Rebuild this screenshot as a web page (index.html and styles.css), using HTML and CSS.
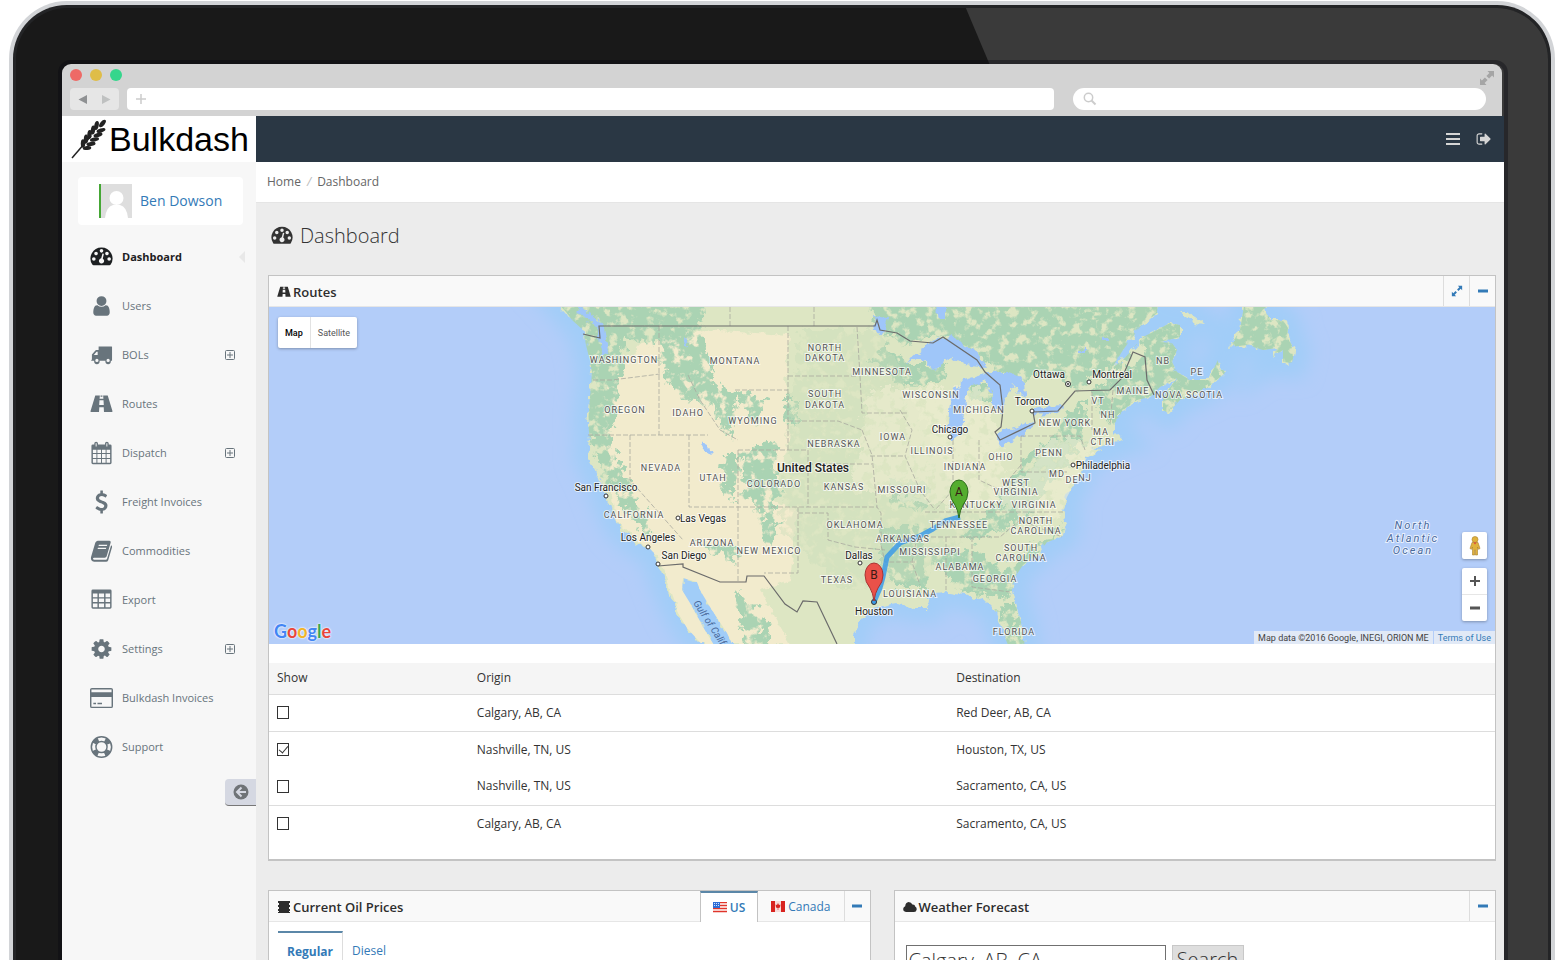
FILE: index.html
```html
<!DOCTYPE html>
<html lang="en">
<head>
  <meta charset="UTF-8">
  <meta name="viewport" content="width=device-width, initial-scale=1.0">
  <title>Bulkdash - Dashboard</title>
  <link rel="stylesheet" href="styles.css">
</head>
<body>
  <!-- icon sprite -->
  <svg class="sprite" aria-hidden="true">
    <symbol id="i-dash" viewBox="0 0 24 24">
      <path fill-rule="evenodd" d="M12 2a11.5 11.5 0 0 0-9.6 17.800q.5.7 1.300.700h16.600q.8 0 1.300-.7A11.500 11.500 0 0 0 12 2zM4 12.200a1.900 1.900 0 1 1 0 3.800 1.900 1.900 0 0 1 0-3.800zM6.300 6.400a1.900 1.900 0 1 1 0 3.800 1.900 1.900 0 0 1 0-3.800zM12 3.700a1.900 1.900 0 1 1 0 3.800A1.900 1.900 0 0 1 12 3.700zM17.700 6.400a1.900 1.900 0 1 1 0 3.800 1.900 1.900 0 0 1 0-3.800zM20 12.200a1.900 1.900 0 1 1 0 3.800 1.900 1.900 0 0 1 0-3.800zM13 8.400l1.500.3-1.200 5a2.700 2.700 0 1 1-1.600-.3z"/>
    </symbol>
    <symbol id="i-user" viewBox="0 0 1792 1792">
      <path d="M1536 1399q0 109-62.500 187t-150.500 78h-854q-88 0-150.500-78t-62.500-187q0-85 8.500-160.500t31.500-152 58.500-131 94-89 134.500-34.500q131 128 313 128t313-128q76 0 134.500 34.500t94 89 58.500 131 31.500 152 8.500 160.500zm-256-887q0 159-112.500 271.500t-271.500 112.500-271.500-112.500-112.500-271.500 112.500-271.500 271.500-112.500 271.500 112.500 112.500 271.500z"/>
    </symbol>
    <symbol id="i-truck" viewBox="0 0 24 24">
      <path fill-rule="evenodd" d="M9 3h13.500q.5 0 .5.500V18h-1.300a2.900 2.900 0 1 1-5.600 0H10a2.900 2.900 0 1 1-5.600 0H1.500q-.3 0-.3-.4l.8-1v-5.200l3.600-4.200Q6 6.800 6.500 6.800H9zM4 12h4V8.500H6.800zM7.200 16a1.700 1.700 0 1 0 0 3.400 1.700 1.700 0 0 0 0-3.400zM18.900 16a1.700 1.700 0 1 0 0 3.400 1.700 1.700 0 0 0 0-3.400z"/>
    </symbol>
    <symbol id="i-road" viewBox="0 0 24 24">
      <path fill-rule="evenodd" d="M5.500 3h4.800l-.3 3.500h4L13.700 3h4.800L23.500 19.500q0 .8-.7.8H14.600l-.3-5H9.700l-.3 5H1.200q-.9 0-.7-.8zM11 3h2v1.500h-2zM9.900 8l-.3 5h4.800l-.3-5z"/>
    </symbol>
    <symbol id="i-calendar" viewBox="0 0 24 24">
      <path fill-rule="evenodd" d="M4.500 3V1.800Q4.500.2 6.400.2t1.900 1.600V3h7.400V1.800q0-1.600 1.900-1.600t1.900 1.600V3h1.500q1.500 0 1.500 1.500v17.800q0 1.500-1.500 1.500H3q-1.500 0-1.500-1.500V4.500Q1.500 3 3 3zM5.900 1.800v3.400h1V1.800zM17.100 1.800v3.400h1V1.800zM3 8.500v3.600h3.700V8.500zM7.700 8.500v3.600h3.800V8.500zM12.500 8.500v3.600h3.800V8.500zM17.300 8.500v3.600H21V8.500zM3 13.100v4.200h3.700v-4.200zM7.700 13.100v4.200h3.800v-4.200zM12.500 13.100v4.200h3.800v-4.200zM17.300 13.100v4.200H21v-4.200zM3 18.300v4h3.700v-4zM7.700 18.300v4h3.800v-4zM12.500 18.300v4h3.800v-4zM17.300 18.300v4H21v-4z"/>
    </symbol>
    <symbol id="i-dollar" viewBox="0 0 1792 1792">
      <path d="M1362 1185q0 153-99.500 263.500t-258.500 136.500v175q0 14-9 23t-23 9h-135q-13 0-22.500-9.500t-9.500-22.500v-175q-66-9-127.500-31t-101.500-44.500-74-48-46.500-37.500-17.500-18q-17-21-2-41l103-135q7-10 23-12 15-2 24 9l2 2q113 99 243 125 37 8 74 8 81 0 142.500-43t61.500-122q0-28-15-53t-33.500-42-58.500-37.500-66-32-80-32.500q-39-16-61.500-25t-61.500-26.500-62.500-31-56.500-35.500-53.500-42.500-43.500-49-35.500-58-21-66.500-8.500-78q0-138 98-242t255-134v-180q0-13 9.500-22.500t22.500-9.500h135q14 0 23 9t9 23v176q57 6 110.500 23t87 33.500 63.500 37.500 39 29 15 14q17 18 5 38l-81 146q-8 15-23 16-14 3-27-7-3-3-14.500-12t-39-26.500-58.500-32-74.500-26-85.500-11.500q-95 0-155 43t-60 111q0 26 8.500 48t29.500 41.500 39.500 33 56 31 60.500 27 70 27.500q53 20 81 31.500t76 35 75.500 42.500 62 50 53 63.500 31.500 76.500 13 94z"/>
    </symbol>
    <symbol id="i-book" viewBox="0 0 24 24">
      <path fill-rule="evenodd" d="M8 1.200h12.300q1.600.3 1.300 1.800l-4.200 14.500q-.5 1.500-2 1.500H4q-1 .2-.9 1.200.2 1 1.500 1H16.500q1 0 1.300-1L22 6q1.300.8 1 2l-4 13.600q-.6 1.600-2.300 1.600H4.300Q.4 22.500 1 18.500L5.500 3.500Q6.200 1.400 8 1.200zM9.300 5.400l-.4 1.300h8.700l.4-1.300zM8.300 8.600l-.4 1.300h8.700l.4-1.300z"/>
    </symbol>
    <symbol id="i-table" viewBox="0 0 24 24">
      <path fill-rule="evenodd" d="M3 1h18q1.500 0 1.500 1.500v17q0 1.500-1.500 1.500H3q-1.500 0-1.500-1.500v-17Q1.500 1 3 1zM3 5.200v3.800h4.800V5.200zM9.300 5.200v3.800h5.400V5.200zM16.200 5.200v3.800H21V5.200zM3 10.500v3.700h4.800v-3.700zM9.300 10.500v3.700h5.400v-3.700zM16.200 10.500v3.700H21v-3.700zM3 15.700v3.800h4.800v-3.800zM9.300 15.700v3.800h5.400v-3.800zM16.200 15.700v3.800H21v-3.800z"/>
    </symbol>
    <symbol id="i-cog" viewBox="0 0 1792 1792">
      <path d="M1152 896q0-106-75-181t-181-75-181 75-75 181 75 181 181 75 181-75 75-181zm512-109v222q0 12-8 23t-20 13l-185 28q-19 54-39 91 35 50 107 138 10 12 10 25t-9 23q-27 37-99 108t-94 71q-12 0-26-9l-138-108q-44 23-91 38-16 136-29 186-7 28-36 28h-222q-14 0-24.500-8.500t-11.500-21.500l-28-184q-49-16-90-37l-141 107q-10 9-25 9-14 0-25-11-126-114-165-168-7-10-7-23 0-12 8-23 15-21 51-66.500t54-70.500q-27-50-41-99l-183-27q-13-2-21-12.500t-8-23.500v-222q0-12 8-23t19-13l186-28q14-46 39-92-40-57-107-138-10-12-10-24 0-10 9-23 26-36 98.500-107.500t94.500-71.500q13 0 26 10l138 107q44-23 91-38 16-136 29-186 7-28 36-28h222q14 0 24.500 8.500t11.500 21.500l28 184q49 16 90 37l142-107q9-9 24-9 13 0 25 10 129 119 165 170 7 8 7 22 0 12-8 23-15 21-51 66.500t-54 70.500q26 50 41 98l183 28q13 2 21 12.500t8 23.500z"/>
    </symbol>
    <symbol id="i-card" viewBox="0 0 24 24">
      <path fill-rule="evenodd" d="M2 1.500h20q2 0 2 2v17q0 2-2 2H2q-2 0-2-2v-17q0-2 2-2zM1.500 3v3h21V3zM1.500 11v10h21V11zM3.500 17h2.800v1.500H3.500zM7.800 17h4.700v1.500H7.800z"/>
    </symbol>
    <symbol id="i-ring" viewBox="0 0 24 24">
      <g fill="none" stroke="currentColor">
        <circle cx="12" cy="12" r="10.600" stroke-width="1.600"/>
        <circle cx="12" cy="12" r="5.800" stroke-width="1.500"/>
        <circle cx="12" cy="12" r="8.400" stroke-width="5" stroke-dasharray="6 7.195" stroke-dashoffset="-3.600"/>
      </g>
    </symbol>
    <symbol id="i-plus" viewBox="0 0 10 10">
      <path d="M1.500.5h7q1 0 1 1v7q0 1-1 1h-7q-1 0-1-1v-7q0-1 1-1zM5 2v6M2 5h6" fill="none" stroke="currentColor"/>
    </symbol>
    <symbol id="i-minus" viewBox="0 0 10 10"><path d="M0 3.500h10v3H0z"/></symbol>
    <symbol id="i-expand" viewBox="0 0 14 14">
      <path d="M7.500 0H14v6.500l-1.900-1.900-3 3-2.700-2.700 3-3zM6.500 14H0V7.500l1.900 1.900 3-3 2.700 2.700-3 3z"/>
    </symbol>
    <symbol id="i-resize" viewBox="0 0 14 14">
      <path d="M8 1h5v5l-1.700-1.700-2.600 2.600-1.600-1.600 2.600-2.600zM6 13H1V8l1.700 1.700 2.600-2.600 1.600 1.600-2.600 2.600z"/>
    </symbol>
    <symbol id="i-signout" viewBox="0 0 1792 1792">
      <path d="M704 1440q0 4 1 20t.5 26.500-3 23.500-10 19.500-20.500 6.500h-320q-119 0-203.500-84.500t-84.500-203.500v-704q0-119 84.500-203.500t203.500-84.500h320q13 0 22.500 9.500t9.500 22.500q0 4 1 20t.5 26.500-3 23.500-10 19.500-20.500 6.500h-320q-66 0-113 47t-47 113v704q0 66 47 113t113 47h312l11.500 1 11.500 3 8 5.500 7 9 2 13.500zm928-544q0 26-19 45l-544 544q-19 19-45 19t-45-19-19-45v-288h-448q-26 0-45-19t-19-45v-384q0-26 19-45t45-19h448v-288q0-26 19-45t45-19 45 19l544 544q19 19 19 45z"/>
    </symbol>
  </svg>

  <div class="laptop">
    <div class="screen">
      <div class="browser-bar">
        <div class="bar-top">
          <span class="dot red"></span>
          <span class="dot yellow"></span>
          <span class="dot green"></span>
          <svg class="expand"><use href="#i-expand"/></svg>
        </div>
        <div class="bar-row">
          <div class="history">
            <svg width="49" height="22" viewBox="0 0 49 22">
              <path d="M17 7v9l-8.500-4.500z" fill="#8f9193"/>
              <path d="M32 7v9l8.500-4.500z" fill="#bfc1c1"/>
            </svg>
          </div>
          <div class="address">
            <svg width="12" height="12" viewBox="0 0 12 12"><path d="M6 1v10M1 6h10" stroke="#ccc" stroke-width="1.500"/></svg>
          </div>
          <div class="finder">
            <svg width="14" height="14" viewBox="0 0 14 14"><circle cx="5.500" cy="5.500" r="4.200" fill="none" stroke="#ccc" stroke-width="1.500"/><path d="M8.500 8.500l4 4" stroke="#ccc" stroke-width="2"/></svg>
          </div>
        </div>
      </div>

      <div class="app">
        <aside class="sidebar">
          <a class="logo" href="#">
            <svg width="36" height="40" viewBox="0 0 36 40">
              <path d="M1 39L20 17" stroke="#222" stroke-width="1.500"/>
              <g fill="#222">
                <ellipse cx="31.500" cy="4.500" rx="2.200" ry="4.500" transform="rotate(40 31.500 4.500)"/>
                <ellipse cx="25.500" cy="6.500" rx="2.200" ry="4.600" transform="rotate(12 25.500 6.500)"/>
                <ellipse cx="22" cy="11" rx="2.200" ry="4.600" transform="rotate(8 22 11)"/>
                <ellipse cx="18.500" cy="15.500" rx="2.200" ry="4.600" transform="rotate(5 18.500 15.500)"/>
                <ellipse cx="15" cy="20" rx="2.200" ry="4.600" transform="rotate(2 15 20)"/>
                <ellipse cx="12" cy="24.500" rx="2.200" ry="4.300"/>
                <ellipse cx="30" cy="11.500" rx="2" ry="4.600" transform="rotate(72 30 11.500)"/>
                <ellipse cx="27" cy="16" rx="2" ry="4.600" transform="rotate(75 27 16)"/>
                <ellipse cx="23.500" cy="20.500" rx="2" ry="4.600" transform="rotate(78 23.500 20.500)"/>
                <ellipse cx="20" cy="25" rx="2" ry="4.600" transform="rotate(80 20 25)"/>
                <ellipse cx="16" cy="29" rx="2" ry="4.300" transform="rotate(82 16 29)"/>
              </g>
            </svg>
            <span>Bulkdash</span>
          </a>
          <div class="profile">
            <svg class="avatar" width="33" height="34" viewBox="0 0 33 34">
              <path d="M0 0h33v34H0z" fill="#dedede"/>
              <path d="M0 0h2v34H0z" fill="#45a735"/>
              <circle cx="17.500" cy="14" r="7" fill="#fff"/>
              <path d="M6 34q1-11 8-13h7q7 2 8 13z" fill="#fff"/>
            </svg>
            <a href="#">Ben Dowson</a>
          </div>
          <nav class="menu">
            <a class="active" href="#"><svg class="icon"><use href="#i-dash"/></svg>Dashboard<span class="caret"></span></a>
            <a href="#"><svg class="icon"><use href="#i-user"/></svg>Users</a>
            <a href="#"><svg class="icon"><use href="#i-truck"/></svg>BOLs<svg class="more"><use href="#i-plus"/></svg></a>
            <a href="#"><svg class="icon"><use href="#i-road"/></svg>Routes</a>
            <a href="#"><svg class="icon"><use href="#i-calendar"/></svg>Dispatch<svg class="more"><use href="#i-plus"/></svg></a>
            <a href="#"><svg class="icon"><use href="#i-dollar"/></svg>Freight Invoices</a>
            <a href="#"><svg class="icon"><use href="#i-book"/></svg>Commodities</a>
            <a href="#"><svg class="icon"><use href="#i-table"/></svg>Export</a>
            <a href="#"><svg class="icon"><use href="#i-cog"/></svg>Settings<svg class="more"><use href="#i-plus"/></svg></a>
            <a href="#"><svg class="icon"><use href="#i-card"/></svg>Bulkdash Invoices</a>
            <a href="#"><svg class="icon"><use href="#i-ring"/></svg>Support</a>
          </nav>
          <button class="collapse" aria-label="Collapse menu">
            <svg width="16" height="16" viewBox="0 0 16 16"><circle cx="8" cy="8" r="7.500" fill="#6f7377"/><path d="M8.500 3.500L4 8l4.500 4.500M4.500 8H13" fill="none" stroke="#d5d8e2" stroke-width="2"/></svg>
          </button>
        </aside>

        <main class="content">
          <header class="topbar">
            <button aria-label="Menu"><svg width="14" height="14" viewBox="0 0 14 14"><path d="M0 1h14v2H0zM0 6h14v2H0zM0 11h14v2H0z"/></svg></button>
            <button aria-label="Sign out"><svg width="16" height="16"><use href="#i-signout"/></svg></button>
          </header>
          <div class="breadcrumb"><a href="#">Home</a><i>/</i><span>Dashboard</span></div>

          <div class="page">
            <h1><svg width="22" height="22"><use href="#i-dash"/></svg>Dashboard</h1>

            <section class="panel routes">
              <div class="panel-head">
                <h2><svg class="head-icon"><use href="#i-road"/></svg>Routes</h2>
                <button class="tool" aria-label="Full screen"><svg width="12" height="12"><use href="#i-resize"/></svg></button>
                <button class="tool" aria-label="Collapse"><svg width="10" height="10"><use href="#i-minus"/></svg></button>
              </div>

              <div class="map">
                <svg class="map-art" viewBox="269 307 1226 337" preserveAspectRatio="xMidYMid slice">
                  <defs>
                    <filter id="rough" x="-5%" y="-5%" width="110%" height="110%">
                      <feTurbulence type="fractalNoise" baseFrequency="0.12" numOctaves="3" seed="4" result="n"/>
                      <feDisplacementMap in="SourceGraphic" in2="n" scale="9" xChannelSelector="R" yChannelSelector="G"/>
                    </filter>
                    <filter id="mottle" x="-5%" y="-5%" width="110%" height="110%">
                      <feTurbulence type="fractalNoise" baseFrequency="0.11" numOctaves="4" seed="9" result="n"/>
                      <feDisplacementMap in="SourceGraphic" in2="n" scale="22" xChannelSelector="R" yChannelSelector="G" result="d"/>
                      <feColorMatrix in="n" values="0 0 0 0 0  0 0 0 0 0  0 0 0 0 0  0 6 0 0 -1.900" result="m"/>
                      <feComposite in="d" in2="m" operator="in"/>
                    </filter>
                    <filter id="soft" x="-10%" y="-10%" width="120%" height="120%"><feGaussianBlur stdDeviation="9"/></filter>
                    <path id="land" d="M555 300L566 312 572 320 583 330 586 345 589 357 592 372 590 397 588 423 590 440 588 457 595 470 600 482 607 500 612 513 620 528 637 543 650 548 658 563 665 583 673 602 678 613 687 628 707 650H717L703 627 690 603 682 590 683 578 697 582 700 590 710 607 727 633 735 650H853V633L863 618 873 608 883 605 898 602 913 608 928 608 930 594 950 593 963 595 973 600 983 598 995 610 1000 625 1010 650H1025L1023 628 1015 603 1012 590 1015 577 1023 565 1040 552 1047 542 1062 537 1067 522 1062 510 1067 497 1080 473 1087 457 1103 450 1090 448 1110 443 1123 440 1115 433 1115 423 1123 410 1137 400 1150 397 1160 387 1177 378 1163 397 1163 410 1168 413 1180 400 1207 388 1225 373 1218 360 1208 380 1190 380 1177 372 1172 362 1177 350 1172 343 1160 342 1180 337 1180 325 1170 323 1157 330 1143 337 1123 360 1112 368 1123 350 1140 327 1157 313 1158 300zM1245 300L1240 330 1230 347 1247 345 1263 350 1277 348 1273 357 1283 350 1283 362 1292 363 1295 350 1290 342 1287 337 1288 328 1283 320 1270 320 1263 300zM1180 312L1190 312 1205 324 1195 323z"/>
                    <clipPath id="land-clip"><use href="#land"/></clipPath>
                  </defs>
                  <path d="M269 307h1226v337H269z" fill="#b3cdf9"/>
                  <use href="#land" fill="#a1cdf8" stroke="#a1cdf8" stroke-width="30" filter="url(#soft)"/>
                  <use href="#land" fill="#dde6c3" filter="url(#rough)"/>
                  <g clip-path="url(#land-clip)">
                    <!-- dry west -->
                    <path d="M640 345L700 330 790 335 785 380 790 440 770 500 798 510 790 580 760 590 790 644H690L660 560 615 520 605 440 600 400z" fill="#f2ebcd" filter="url(#rough)"/>
                    <!-- forests -->
                    <g fill="#aad3b3" filter="url(#mottle)">
                      <path d="M550 300H705L700 345 690 400 665 380 660 345 625 340 620 380 612 435 618 460 645 515 655 545 640 530 610 490 585 430 582 340z"/>
                      <path d="M660 330H700L715 385 738 395 730 440 710 405 680 400zM735 390L765 400 760 425 745 410zM783 400h14v24h-10zM740 450L775 440 780 490 770 520 745 500zM725 455l14 0 -6 50 -12-20zM700 540l40 10 -4 14 -30-14zM735 590L765 620 770 650H745zM760 510l18 0-6 40-10-10z"/>
                      <path d="M866 300H1160L1150 330 1115 370 1075 390 1050 375 1010 385 985 360 940 335 905 345 880 330z"/>
                      <path d="M885 345L910 365 950 365 940 385 900 385 870 360zM960 385l35 0 5 18-30-2zM1090 392L1150 355 1160 395 1110 425zM1150 300L1185 330 1175 370 1220 360 1225 380 1160 415 1140 370zM1225 300H1300V370H1230z"/>
                      <path d="M1085 400L1060 425 1040 450 1010 480 985 520 960 535 975 545 1000 530 1030 520 1045 490 1065 465 1085 440z"/>
                      <path d="M880 530L925 525 920 560 930 590 900 590 880 565zM930 555L980 550 1000 570 1020 560 1062 525 1045 560 1005 600 960 592zM890 480l40 5-5 25-35-5zM1000 605l15 0 8 45-20 0z"/>
                    </g>
                    <g fill="#c8dcb8" opacity=".4" filter="url(#mottle)"><path d="M800 330h80l60 130 40 60-60 60-80 10-60-60z"/></g>
                    <g fill="#f0efd3" opacity=".6" filter="url(#mottle)"><path d="M870 390h110l20 50 10 60-60 10-100-20zM1050 440h50l-40 80-60-10z"/></g>
                    <!-- lakes -->
                    <g fill="#9fc6f9" filter="url(#rough)">
                      <path d="M907 364L917 352 937 338 950 336 975 350 985 368 965 365 952 358 935 370 920 358z"/>
                      <path d="M985 372L975 378 960 382 950 400 948 425 952 440 962 432 965 400 970 386 985 380 992 395 992 405 1002 415 1005 400 1012 385 1025 398 1024 380 1008 372z"/>
                      <path d="M995 434L1005 430 1035 420 1034 427 1015 440 1000 445zM1030 412L1045 406 1063 405 1058 414 1035 416zM700 441l8 4 2 10-6-4zM598 318l6 10 4 24-5 2-6-22zM580 305l20 18-4 4-18-16z"/>
                      <path d="M937 305h10v16h-8zM873 316l14 2-4 16-8-6zM684 338l6 4-3 6zM1103 337h6v4h-6zM1080 350h5v3h-5z"/>
                    </g>
                  </g>
                  <!-- state lines -->
                  <path class="states" d="M593 380L612 380 660 374M659 326V435M588 435H708M630 435V480L683 540M689 435V507H877M738 450V582M738 450H808V507M735 390H788M788 326V450M788 376H858M788 421H838L862 430M808 464H872M798 513H828V540L855 547 885 550M798 507V573H764M857 327L860 376 862 413H907M862 430L872 455 877 507 881 513V545L885 562H915M870 456H905M900 410L912 430 905 456 920 490 935 510M953 440V490L935 510M979 440V480L1000 490 1021 465M1021 436V472H1067M1021 436H1080L1085 450M925 512H1063M917 537H1000L1020 520 1062 537M946 537V590M972 537V587L1010 592M917 537L912 562 920 585M1092 392V430M1113 390L1110 425M730 307V326M814 307V326M688 375L700 400 720 430 738 440"/>
                  <!-- country borders -->
                  <path class="border" d="M583 334L600 338 599 326H875L877 320 880 330 897 333 910 341 933 343 943 337 977 360 985 372 1000 385 1003 410 1001 427 995 432 1000 440 1035 423 1033 412 1058 411 1075 391 1110 390 1122 378 1133 352 1145 357 1147 380 1154 395M658 566L683 564V567L720 582H746L747 576H764L785 604 797 612 803 601 817 602 837 644"/>
                  <path d="M960 517L945 521 933 529 920 536 900 543 887 557 883 577 880 588 874 602" fill="none" stroke="#3c9be8" stroke-opacity=".85" stroke-width="5" stroke-linejoin="round"/>

                  <g class="state-names">
                    <text x="624" y="363">WASHINGTON</text><text x="625" y="413">OREGON</text><text x="688" y="416">IDAHO</text><text x="735" y="364">MONTANA</text>
                    <text x="825" y="351">NORTH</text><text x="825" y="361">DAKOTA</text><text x="825" y="397">SOUTH</text><text x="825" y="408">DAKOTA</text>
                    <text x="882" y="375">MINNESOTA</text><text x="753" y="424">WYOMING</text><text x="834" y="447">NEBRASKA</text><text x="661" y="471">NEVADA</text>
                    <text x="713" y="481">UTAH</text><text x="774" y="487">COLORADO</text><text x="844" y="490">KANSAS</text><text x="634" y="518">CALIFORNIA</text>
                    <text x="712" y="546">ARIZONA</text><text x="769" y="554">NEW MEXICO</text><text x="855" y="528">OKLAHOMA</text><text x="837" y="583">TEXAS</text>
                    <text x="931" y="398">WISCONSIN</text><text x="979" y="413">MICHIGAN</text><text x="893" y="440">IOWA</text><text x="932" y="454">ILLINOIS</text>
                    <text x="965" y="470">INDIANA</text><text x="1001" y="460">OHIO</text><text x="1049" y="456">PENN</text><text x="1065" y="426">NEW YORK</text>
                    <text x="1098" y="404">VT</text><text x="1108" y="418">NH</text><text x="1101" y="435">MA</text><text x="1097" y="445">CT</text><text x="1110" y="445">RI</text>
                    <text x="1057" y="477">MD</text><text x="1072" y="483">DE</text><text x="1085" y="481">NJ</text><text x="1133" y="394">MAINE</text><text x="1163" y="364">NB</text>
                    <text x="1197" y="375">PE</text><text x="1189" y="398">NOVA SCOTIA</text><text x="902" y="493">MISSOURI</text><text x="1016" y="486">WEST</text><text x="1016" y="495">VIRGINIA</text>
                    <text x="976" y="508">KENTUCKY</text><text x="1034" y="508">VIRGINIA</text><text x="959" y="528">TENNESSEE</text><text x="1036" y="524">NORTH</text><text x="1036" y="534">CAROLINA</text>
                    <text x="903" y="542">ARKANSAS</text><text x="930" y="555">MISSISSIPPI</text><text x="1021" y="551">SOUTH</text><text x="1021" y="561">CAROLINA</text><text x="960" y="570">ALABAMA</text>
                    <text x="995" y="582">GEORGIA</text><text x="910" y="597">LOUISIANA</text><text x="1014" y="635">FLORIDA</text>
                  </g>
                  <g class="cities">
                    <text x="606" y="491">San Francisco</text><text x="703" y="522">Las Vegas</text><text x="648" y="541">Los Angeles</text><text x="684" y="559">San Diego</text>
                    <text x="859" y="559">Dallas</text><text x="874" y="615">Houston</text><text x="950" y="433">Chicago</text><text x="1032" y="405">Toronto</text>
                    <text x="1049" y="378">Ottawa</text><text x="1112" y="378">Montreal</text><text x="1103" y="469">Philadelphia</text>
                    <text class="country" x="813" y="472">United States</text>
                  </g>
                  <g fill="#fff" stroke="#333">
                    <circle cx="606" cy="496" r="2"/><circle cx="678" cy="518" r="2"/><circle cx="648" cy="547" r="2"/><circle cx="658" cy="564" r="2"/>
                    <circle cx="860" cy="563" r="2"/><circle cx="950" cy="437" r="2"/><circle cx="1032" cy="411" r="2"/><circle cx="1068" cy="384" r="2.500"/>
                    <circle cx="1068" cy="384" r=".7"/><circle cx="1089" cy="382" r="2"/><circle cx="1073" cy="465" r="2"/><circle cx="874" cy="602" r="2.500" fill="#3c9be8"/>
                  </g>
                  <g class="waters">
                    <text x="1413" y="529">North</text><text x="1413" y="542">Atlantic</text><text x="1413" y="554">Ocean</text>
                    <text class="gulf" transform="translate(693 603) rotate(57)">Gulf of California</text>
                  </g>
                  <g class="pins">
                    <path d="M959 518q-1-8-4-13-5-6-5-13a9 12 0 0 1 18 0q0 7-5 13-3 5-4 13z" fill="#55ad2e" stroke="#2c6b1b"/>
                    <text x="959" y="496">A</text>
                    <path d="M874 601q-1-8-4-13-5-6-5-13a9 12 0 0 1 18 0q0 7-5 13-3 5-4 13z" fill="#ea5149" stroke="#a33"/>
                    <text x="874" y="579">B</text>
                  </g>
                </svg>
                <div class="map-type"><button class="on">Map</button><button>Satellite</button></div>
                <div class="map-controls">
                  <button class="pegman" aria-label="Street View"><svg width="14" height="20" viewBox="0 0 14 20"><g fill="#e0b23c" stroke="#a9802b" stroke-width=".6"><circle cx="7" cy="3.500" r="3"/><path d="M4 6.500h6l2 6-1.500.8L9.500 11v8H7.400v-5h-.8v5H4.500v-8l-1 2.300L2 12.500z"/></g><path d="M5.500 6.500h3L7 8.500z" fill="#e0443a"/></svg></button>
                  <div class="zoom">
                    <button aria-label="Zoom in"><svg width="10" height="10" viewBox="0 0 10 10"><path d="M4 0h2v4h4v2H6v4H4V6H0V4h4z"/></svg></button>
                    <button aria-label="Zoom out"><svg width="10" height="10"><use href="#i-minus"/></svg></button>
                  </div>
                </div>
                <div class="google"><b class="c1">G</b><b class="c2">o</b><b class="c3">o</b><b class="c1">g</b><b class="c4">l</b><b class="c2">e</b></div>
                <div class="credits"><span>Map data ©2016 Google, INEGI, ORION ME</span><a href="#">Terms of Use</a></div>
              </div>

              <table class="routes-table">
                <thead>
                  <tr><th class="col-show">Show</th><th class="col-origin">Origin</th><th>Destination</th></tr>
                </thead>
                <tbody>
                  <tr><td><input type="checkbox" aria-label="Show Calgary to Red Deer"></td><td>Calgary, AB, CA</td><td>Red Deer, AB, CA</td></tr>
                  <tr class="joined"><td><input type="checkbox" checked aria-label="Show Nashville to Houston"></td><td>Nashville, TN, US</td><td>Houston, TX, US</td></tr>
                  <tr><td><input type="checkbox" aria-label="Show Nashville to Sacramento"></td><td>Nashville, TN, US</td><td>Sacramento, CA, US</td></tr>
                  <tr><td><input type="checkbox" aria-label="Show Calgary to Sacramento"></td><td>Calgary, AB, CA</td><td>Sacramento, CA, US</td></tr>
                </tbody>
              </table>
            </section>

            <div class="row">
              <section class="panel">
                <div class="panel-head">
                  <h2><svg class="head-icon" viewBox="0 0 14 14"><path d="M1 1h12v2h-1v2h1v2h-1v2h1v2h-1v1h1v1H1v-1h1v-1H1V9h1V7H1V5h1V3H1z"/></svg>Current Oil Prices</h2>
                  <button class="head-tab on">
                    <svg width="14" height="11" viewBox="0 0 14 11"><path d="M0 0h14v11H0z" fill="#fff"/><path d="M0 .5h14M0 3.500h14M0 6.500h14M0 9.500h14" stroke="#e0352b" stroke-width="1.500"/><path d="M0 0h7v6H0z" fill="#2f6fd6"/><path d="M1 1.500h5M1 3.500h5" stroke="#cfe0ff" stroke-dasharray="1 1"/></svg>US
                  </button>
                  <button class="head-tab">
                    <svg width="14" height="11" viewBox="0 0 14 11"><path d="M0 0h14v11H0z" fill="#f6dcda"/><path d="M0 0h4v11H0zM10 0h4v11h-4z" fill="#d8231f"/><path d="M7 2l1 2 1.500-.5L9 6.500 7.300 7v2h-.6V7L5 6.500 4.500 3.500 6 4z" fill="#d8231f"/></svg>Canada
                  </button>
                  <button class="tool" aria-label="Collapse"><svg width="10" height="10"><use href="#i-minus"/></svg></button>
                </div>
                <div class="fuel-tabs"><button class="on">Regular</button><button>Diesel</button></div>
              </section>

              <section class="panel">
                <div class="panel-head">
                  <h2><svg class="head-icon" viewBox="0 0 14 14"><path d="M3 12q-3-.5-2.800-3.200Q.4 6.800 2.200 6.300 2.500 2.500 5.600 2q2.800 0 3.800 2.500 2.600-.2 2.800 2 1.800.8 1.500 3Q13.300 12 11 12z"/></svg>Weather Forecast</h2>
                  <button class="tool" aria-label="Collapse"><svg width="10" height="10"><use href="#i-minus"/></svg></button>
                </div>
                <form class="weather">
                  <input type="text" value="Calgary, AB, CA" aria-label="Location">
                  <button type="button">Search</button>
                </form>
              </section>
            </div>
          </div>
        </main>
      </div>
    </div>
  </div>
</body>
</html>
```
FILE: styles.css
```css
* {
  box-sizing: border-box;
}
body {
  margin: 0;
  height: 100vh;
  overflow: hidden;
  background: #fff;
  font-family: "Open Sans", sans-serif;
  font-size: 12px;
  line-height: 18px;
  color: #333;
}
a {
  color: #337ab7;
  text-decoration: none;
}
button {
  margin: 0;
  padding: 0;
  border: 0;
  background: none;
  font: inherit;
  color: inherit;
  cursor: pointer;
}
svg {
  display: block;
  flex: none;
  fill: currentColor;
}
.sprite {
  position: absolute;
  width: 0;
  height: 0;
}

/* laptop */
.laptop {
  position: relative;
  margin: 1px 5px 0 9px;
  padding: 59px 47px 0 49px;
  border: 4px solid #d2d4d7;
  border-bottom: 0;
  border-radius: 58px 58px 0 0;
  background: #191919;
  box-shadow: inset 0 0 0 3px #232426;
}
.laptop::before {
  content: "";
  position: absolute;
  inset: 3px 3px 0;
  border-radius: 51px 51px 0 0;
  background: #3a3a3a;
  clip-path: polygon(62% 0, 100% 0, 100% 100%, 93% 100%);
}
.screen {
  position: relative;
  border-radius: 9px 9px 0 0;
  box-shadow: 0 0 0 4px rgba(5, 5, 15, .35);
}

/* browser */
.browser-bar {
  margin-right: 2px;
  padding: 5px 8px 6px;
  border-radius: 9px 9px 0 0;
  background: #d3d3d3;
}
.bar-top {
  display: flex;
  gap: 8px;
  height: 19px;
}
.dot {
  width: 12px;
  height: 12px;
  border-radius: 50%;
}
.red { background: #ee6a66; }
.yellow { background: #dfbd48; }
.green { background: #35d68c; }
.expand {
  width: 14px;
  height: 14px;
  margin: 2px 0 0 auto;
  color: #a5a5a5;
}
.bar-row {
  display: flex;
  padding-right: 8px;
}
.history {
  width: 49px;
  margin-right: 8px;
  border-radius: 4px;
  background: #e6e6e6;
}
.address, .finder {
  display: flex;
  align-items: center;
  padding-left: 8px;
  height: 22px;
  background: #fff;
}
.address {
  flex: 932;
  border-radius: 4px;
}
.finder {
  flex: 408;
  margin-left: 19px;
  padding-left: 10px;
  border-radius: 11px;
}

/* sidebar */
.app {
  display: flex;
  min-height: 100vh;
  background: #ececec;
}
.sidebar {
  flex: none;
  display: flex;
  flex-direction: column;
  width: 194px;
  background: #f7f7f7;
}
.logo {
  display: flex;
  align-items: center;
  height: 46px;
  padding-left: 9px;
  background: #fff;
  color: #000;
  font: 34px/46px "Liberation Sans", Arial, sans-serif;
}
.logo span {
  margin-left: 2px;
}
.profile {
  display: flex;
  align-items: center;
  gap: 8px;
  height: 48px;
  margin: 15px 13px 7px 16px;
  padding-left: 21px;
  border-radius: 4px;
  background: #fff;
  font-size: 14px;
}
.menu a {
  display: flex;
  align-items: center;
  height: 49px;
  padding: 0 21px 0 28px;
  color: #68747c;
  font-size: 11px;
}
.menu .active {
  padding-right: 11px;
  color: #1d2022;
  font-weight: 700;
}
.icon {
  width: 23px;
  height: 24px;
  margin-right: 9px;
}
.more {
  width: 10px;
  height: 10px;
  margin-left: auto;
}
.caret {
  margin-left: auto;
  border: 6px solid transparent;
  border-left: 0;
  border-right-color: #e8e8e8;
}
.collapse {
  display: flex;
  align-items: center;
  justify-content: center;
  align-self: flex-end;
  width: 31px;
  height: 27px;
  margin-top: 8px;
  border-bottom: 1px solid #777;
  border-radius: 4px 0 0 4px;
  background: #d5d8e2;
}

/* content */
.content {
  flex: 1;
  min-width: 0;
}
.topbar {
  display: flex;
  align-items: center;
  justify-content: flex-end;
  gap: 16px;
  height: 46px;
  padding-right: 12px;
  background: #2a3744;
  color: #d5d5d5;
}
.breadcrumb {
  height: 41px;
  padding-left: 11px;
  border-bottom: 1px solid #e5e5e5;
  background: #fff;
  line-height: 40px;
  color: #666;
}
.breadcrumb a {
  color: #666;
}
.breadcrumb i {
  margin: 0 6px;
  color: #bbb;
}
.page {
  padding: 18px 8px 24px 12px;
}
h1 {
  display: flex;
  align-items: center;
  gap: 7px;
  margin: 0 0 24px 3px;
  font-size: 20px;
  line-height: 30px;
  font-weight: 300;
  color: #333;
}
.panel {
  flex: 1;
  min-width: 0;
  border: 1px solid #c3c3c3;
  background: #fff;
}
.routes {
  padding-bottom: 17px;
  border-bottom-width: 2px;
}
.panel-head {
  display: flex;
  height: 31px;
  border-bottom: 1px solid #e6e6e6;
  background: #f9f9f9;
  color: #337ab7;
}
.panel-head h2 {
  display: flex;
  align-items: center;
  gap: 2px;
  flex: 1;
  margin: 0;
  padding: 1px 0 0 8px;
  font-size: 13px;
  line-height: 28px;
  font-weight: 600;
  color: #2d2d2d;
}
.head-icon {
  width: 14px;
  height: 14px;
}
.tool {
  display: flex;
  align-items: center;
  justify-content: center;
  width: 26px;
  border-left: 1px solid #ddd;
}

/* map */
.map {
  position: relative;
  height: 337px;
  overflow: hidden;
}
.map-art {
  width: 100%;
  height: 100%;
}
.states {
  fill: none;
  stroke: #a9a9a0;
  stroke-width: .8;
  stroke-dasharray: 5 2;
}
.border {
  fill: none;
  stroke: #6b6b6b;
  stroke-width: 1.2;
}
.map-art text {
  font-family: Roboto, sans-serif;
  text-anchor: middle;
  paint-order: stroke;
  stroke: rgba(255, 255, 255, .7);
  stroke-width: 2px;
}
.state-names {
  font-size: 9px;
  letter-spacing: 1px;
  fill: #555;
}
.cities {
  font-size: 10px;
  fill: #222;
}
.cities .country {
  font-size: 12px;
  font-weight: 500;
}
.waters {
  font-size: 11px;
  font-style: italic;
  letter-spacing: 2px;
  fill: #4a6a9c;
}
.map-art .gulf {
  font-size: 10px;
  letter-spacing: 0;
  text-anchor: start;
  stroke: none;
}
.pins {
  font-size: 12px;
  fill: #3a1a14;
}
.map-art .pins text {
  stroke: none;
}
.map-type {
  position: absolute;
  top: 10px;
  left: 9px;
  display: flex;
  border-radius: 2px;
  background: #fff;
  box-shadow: 0 1px 3px rgba(0, 0, 0, .3);
  font-family: Roboto, sans-serif;
  font-size: 9px;
  color: #565656;
}
.map-type button {
  height: 31px;
  padding: 0 7px;
}
.map-type .on {
  border-right: 1px solid #e2e2e2;
  font-weight: 500;
  color: #000;
}
.map-controls {
  position: absolute;
  right: 8px;
  bottom: 23px;
  width: 25px;
  color: #555;
}
.pegman, .zoom {
  border-radius: 2px;
  background: #fff;
  box-shadow: 0 1px 3px rgba(0, 0, 0, .3);
}
.map-controls button {
  display: flex;
  align-items: center;
  justify-content: center;
  width: 25px;
  height: 26px;
}
.map-controls .pegman {
  height: 27px;
  margin-bottom: 9px;
  background: #fff;
}
.zoom button + button {
  height: 27px;
  border-top: 1px solid #e6e6e6;
}
.google {
  position: absolute;
  left: 5px;
  bottom: 1px;
  font: 18px/24px Lato, sans-serif;
  text-shadow: 0 0 2px #fff, 0 0 2px #fff;
}
.google b { font-weight: 700; }
.c1 { color: #4285f4; }
.c2 { color: #e8453c; }
.c3 { color: #f0b429; }
.c4 { color: #34a853; }
.credits {
  position: absolute;
  right: 0;
  bottom: 0;
  display: flex;
  gap: 1px;
  height: 13px;
  font: 9px/14px Roboto, sans-serif;
  color: #444;
}
.credits span, .credits a {
  padding: 0 4px;
  background: rgba(245, 245, 245, .7);
}

/* routes table */
.routes-table {
  width: 100%;
  margin-top: 19px;
  border-collapse: collapse;
  table-layout: fixed;
}
.routes-table th {
  height: 31px;
  padding: 0 8px;
  border-bottom: 1px solid #ddd;
  background: #f5f5f5;
  font-weight: 400;
  text-align: left;
}
.col-show { width: 16.3%; }
.col-origin { width: 39.1%; }
.routes-table td {
  height: 37px;
  padding: 0 8px;
  border-bottom: 1px solid #ddd;
}
.routes-table .joined td,
.routes-table tr:last-child td {
  border-bottom: 0;
}
.routes-table input {
  display: block;
  appearance: none;
  width: 12px;
  height: 13px;
  margin: 0;
  border: 1px solid #333;
  background: #fff;
}
.routes-table input:checked::before {
  content: "";
  display: block;
  width: 4px;
  height: 8px;
  margin: 0 0 0 3px;
  border: solid #333;
  border-width: 0 1px 1px 0;
  transform: rotate(40deg);
}

/* bottom panels */
.row {
  display: flex;
  gap: 23px;
  margin-top: 29px;
}
.row .panel {
  min-height: 220px;
}
.head-tab {
  display: flex;
  align-items: center;
  gap: 3px;
  padding: 1px 13px 0;
}
.head-tab.on {
  height: 31px;
  padding: 0 12px;
  border: 1px solid #c3c3c3;
  border-top: 2px solid #5b87a8;
  border-bottom: 0;
  background: #fff;
  font-weight: 600;
}
.fuel-tabs {
  display: flex;
  margin: 9px 9px 0;
  color: #337ab7;
}
.fuel-tabs button {
  height: 40px;
  padding: 0 9px;
}
.fuel-tabs .on {
  border-top: 2px solid #5b87a8;
  border-right: 1px solid #ddd;
  font-weight: 700;
}
.weather {
  display: flex;
  gap: 6px;
  padding: 23px 11px;
}
.weather input {
  width: 260px;
  height: 30px;
  padding: 0 2px;
  border: 1px solid #707070;
  border-radius: 0;
  font: 300 20px/28px "Open Sans", sans-serif;
  color: #333;
}
.weather button {
  width: 72px;
  height: 30px;
  border: 1px solid #c8c8c8;
  background: #dedede;
  font-size: 20px;
  font-weight: 300;
}
```
